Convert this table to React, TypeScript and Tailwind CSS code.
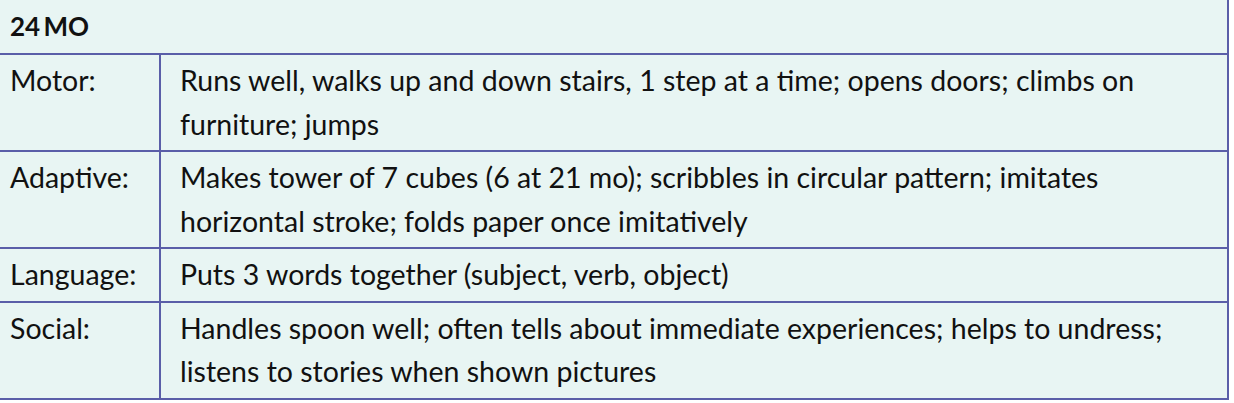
const rows = [
  {
    label: "Motor:",
    text: "Runs well, walks up and down stairs, 1 step at a time; opens doors; climbs on furniture; jumps",
  },
  {
    label: "Adaptive:",
    text: "Makes tower of 7 cubes (6 at 21\u00a0mo); scribbles in circular pattern; imitates horizontal stroke; folds paper once imitatively",
  },
  {
    label: "Language:",
    text: "Puts 3 words together (subject, verb, object)",
  },
  {
    label: "Social:",
    text: "Handles spoon well; often tells about immediate experiences; helps to undress; listens to stories when shown pictures",
  },
];

export default function App() {
  return (
    <div className="w-[1234px] h-[403px] bg-white overflow-hidden">
      <table
        className="w-[1229px] border-collapse bg-[#e8f5f3] text-[28.5px] leading-[43.5px] text-[#111]"
        style={{ fontFamily: "Lato, 'Liberation Sans', sans-serif" }}
      >
        <tbody>
          <tr className="border-b-2 border-r-2 border-[#5a5ea8]">
            <td colSpan={2} className="h-[54px] px-[10px] text-[26px] font-bold align-middle">
              24&thinsp;MO
            </td>
          </tr>
          {rows.map((r) => (
            <tr key={r.label} className="border-b-2 border-[#5a5ea8]">
              <td className="w-[160px] border-r-2 border-[#5a5ea8] px-[10px] py-[4px] align-top">
                {r.label}
              </td>
              <td className="border-r-2 border-[#5a5ea8] pl-[19px] pr-[10px] py-[4px] align-top">
                {r.text}
              </td>
            </tr>
          ))}
        </tbody>
      </table>
    </div>
  );
}
